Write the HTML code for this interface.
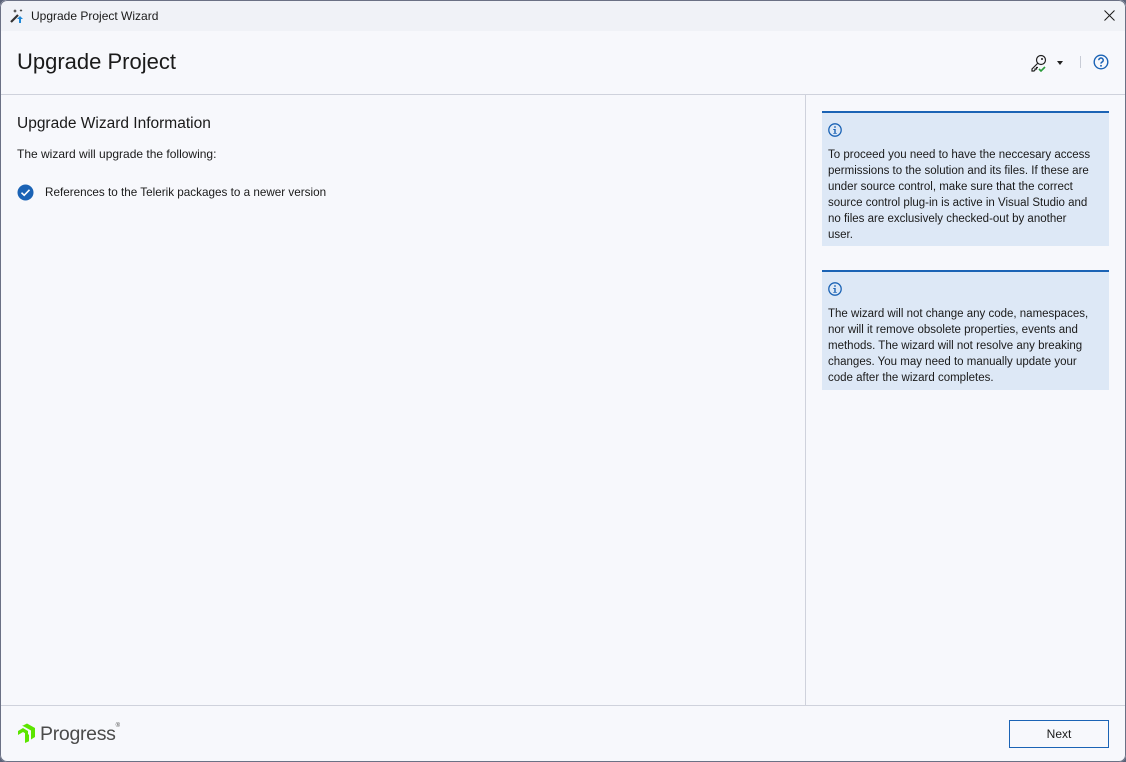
<!DOCTYPE html>
<html><head><style>
*{margin:0;padding:0;box-sizing:border-box}
body{width:1126px;height:762px;overflow:hidden;font-family:"Segoe UI","Liberation Sans",sans-serif;background:#5a6278}
.win{position:absolute;left:0;top:0;width:1126px;height:762px;background:#f7f8fc;border-radius:7px;overflow:hidden}
.frame{position:absolute;left:0;top:0;width:1126px;height:762px;border:1px solid #6b7185;border-radius:7px;pointer-events:none}
.title{position:absolute;left:0;top:0;width:100%;height:31px;background:#f0f2f7;font-size:12px;color:#1a1a1a}
.title span{position:absolute;left:31px;top:9px}
.hdr{position:absolute;left:17px;top:49px;font-size:22px;color:#1a1a1a}
.hl{position:absolute;left:0;top:94px;width:100%;height:1px;background:#cfd2dc}
.vl{position:absolute;left:805px;top:95px;width:1px;height:610px;background:#cfd2dc}
.bl{position:absolute;left:0;top:705px;width:100%;height:1px;background:#cfd2dc}
.t{position:absolute;color:#1a1a1a;font-size:12px;white-space:nowrap}
.box{position:absolute;left:822px;width:287px;background:#dde8f6;border-top:2px solid #1b63b5;font-size:11.5px;line-height:16px;color:#1a1a1a;padding:10px 6px 4px 6px;white-space:nowrap}
.btn{position:absolute;left:1009px;top:720px;width:100px;height:28px;border:1px solid #1b63b5;background:#f7f8fc;font-size:12px;text-align:center;line-height:27px;color:#1a1a1a}
</style></head><body><div class="win">
<div class="title">
<svg style="position:absolute;left:9px;top:8px" width="16" height="16" viewBox="0 0 16 16"><path d="M2 14L9 7" stroke="#333" stroke-width="2.2"/><path d="M11 8l-3 3h2v4h2v-4h2z" fill="#1e88d8"/><path d="M6 1l.6 1.4L8 3l-1.4.6L6 5l-.6-1.4L4 3l1.4-.6zM12 1l.5 1 1 .5-1 .5-.5 1-.5-1-1-.5 1-.5z" fill="#333"/></svg>
<span>Upgrade Project Wizard</span>
<svg style="position:absolute;left:1104px;top:10px" width="11" height="11" viewBox="0 0 11 11"><path d="M.5.5l10 10M10.5.5l-10 10" stroke="#1a1a1a" stroke-width="1"/></svg></div>
<div class="hdr">Upgrade Project</div>
<svg style="position:absolute;left:1030px;top:54px" width="18" height="18" viewBox="0 0 18 18"><circle cx="11" cy="6" r="4.5" fill="none" stroke="#222" stroke-width="1.2"/><circle cx="12" cy="5" r="1" fill="#222"/><path d="M8 9L2 15v2h2l1-1v-1h1.5v-1.5H8" fill="none" stroke="#222" stroke-width="1.2"/><path d="M9 15l2 2 4-4" fill="none" stroke="#2a9b3a" stroke-width="1.6"/></svg>
<div style="position:absolute;left:1057px;top:61px;width:0;height:0;border-left:3px solid transparent;border-right:3px solid transparent;border-top:4px solid #222"></div>
<div style="position:absolute;left:1080px;top:56px;width:1px;height:12px;background:#c8ccd6"></div>
<svg style="position:absolute;left:1093px;top:54px" width="16" height="16" viewBox="0 0 16 16"><circle cx="8" cy="8" r="6.8" fill="none" stroke="#1b63b5" stroke-width="1.4"/><path d="M5.8 6.2a2.2 2.2 0 1 1 3 2c-.6.3-.8.7-.8 1.4" fill="none" stroke="#1b63b5" stroke-width="1.5"/><circle cx="8" cy="11.8" r=".95" fill="#1b63b5"/></svg>
<div class="hl"></div><div class="vl"></div><div class="bl"></div>
<div class="t" style="left:17px;top:115px;font-size:15.5px">Upgrade Wizard Information</div>
<div class="t" style="left:17px;top:147px">The wizard will upgrade the following:</div>
<svg style="position:absolute;left:17px;top:184px" width="17" height="17" viewBox="0 0 17 17"><circle cx="8.5" cy="8.5" r="8" fill="#1b63b5"/><path d="M4.5 8.7l2.7 2.6 5.3-5.5" fill="none" stroke="#fff" stroke-width="1.6"/></svg>
<div class="t" style="left:45px;top:186px;font-size:11.7px">References to the Telerik packages to a newer version</div>
<div class="box" style="top:111px;height:135px"><svg width="14" height="14" viewBox="0 0 14 14" style="display:block;margin-bottom:10px"><circle cx="7" cy="7" r="6.2" fill="none" stroke="#1b63b5" stroke-width="1.3"/><rect x="6.3" y="6" width="1.4" height="4.5" fill="#1b63b5"/><circle cx="7" cy="4" r=".9" fill="#1b63b5"/><path d="M5.3 6h2v1h-2zM5.3 10h3.5v.8H5.3z" fill="#1b63b5"/></svg>To proceed you need to have the neccesary access<br>permissions to the solution and its files. If these are<br>under source control, make sure that the correct<br>source control plug-in is active in Visual Studio and<br>no files are exclusively checked-out by another<br>user.</div>
<div class="box" style="top:270px;height:120px"><svg width="14" height="14" viewBox="0 0 14 14" style="display:block;margin-bottom:10px"><circle cx="7" cy="7" r="6.2" fill="none" stroke="#1b63b5" stroke-width="1.3"/><rect x="6.3" y="6" width="1.4" height="4.5" fill="#1b63b5"/><circle cx="7" cy="4" r=".9" fill="#1b63b5"/><path d="M5.3 6h2v1h-2zM5.3 10h3.5v.8H5.3z" fill="#1b63b5"/></svg>The wizard will not change any code, namespaces,<br>nor will it remove obsolete properties, events and<br>methods. The wizard will not resolve any breaking<br>changes. You may need to manually update your<br>code after the wizard completes.</div>
<svg style="position:absolute;left:17px;top:723px" width="20" height="20" viewBox="0 0 20 20"><path d="M1 8l5-3 5 3v4l-5-3-5 3z" fill="#5ce500"/><path d="M5 3l5-2.5 8 4.5v9l-4 2.5v-9l-4-2.3-5-2.7z" fill="#5ce500"/><path d="M8 9.5l4 2.2v6.5l-4 1.8z" fill="#5ce500"/></svg>
<div class="t" style="left:40px;top:723px;font-size:19.5px;color:#4b4b4b;letter-spacing:-0.3px">Progress<sup style="font-size:6px;vertical-align:top">®</sup></div>
<div class="btn">Next</div>
<div class="frame"></div>
</div></body></html>
